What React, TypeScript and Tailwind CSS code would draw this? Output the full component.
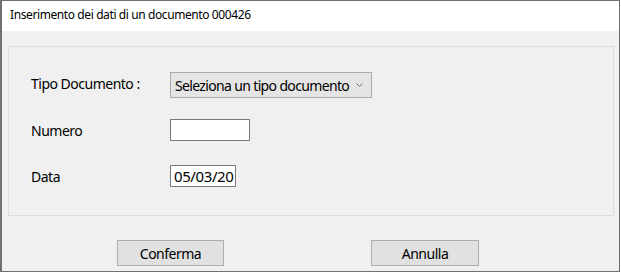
export default function App() {
  const font = { fontFamily: '"Noto Sans", "Open Sans", sans-serif' };
  return (
    <div className="w-[621px] h-[273px] bg-white" style={font}>
      <div className="w-[620px] h-[272px] border border-[#707070] border-l-2 flex flex-col bg-[#f0f0f0]">
        <div className="h-[30px] bg-white flex items-center pl-[8px] pb-[2px] text-[12px] tracking-[-0.4px] text-black whitespace-nowrap">
          Inserimento dei dati di un documento 000426
        </div>
        <div className="flex-1 flex flex-col px-[6px] pt-[15px]">
          <div className="h-[170px] w-[606px] border border-[#dcdcdc] flex flex-col pl-[22px] pt-[25px] text-[14px] tracking-[-0.5px] text-black">
            <div className="flex items-center h-[26px]">
              <span className="w-[139px] pb-[3px]">Tipo Documento :</span>
              <div className="w-[202px] h-[26px] bg-[#e5e5e5] border border-[#acacac] flex items-center pl-[4px] pr-[8px] justify-between whitespace-nowrap">
                <span className="tracking-[-0.65px]">Seleziona un tipo documento</span>
                <svg width="7" height="4" viewBox="0 0 7 4">
                  <path d="M0.5 0.5 L3.5 3.5 L6.5 0.5" fill="none" stroke="#707070" strokeWidth="1" />
                </svg>
              </div>
            </div>
            <div className="flex items-center h-[22px] mt-[21px]">
              <span className="w-[139px]">Numero</span>
              <div className="w-[80px] h-[22px] bg-white border border-[#7a7a7a]" />
            </div>
            <div className="flex items-center h-[22px] mt-[24px]">
              <span className="w-[139px]">Data</span>
              <div className="w-[66px] h-[22px] bg-white border border-[#7a7a7a] flex items-center pl-[3px] text-[15px] tracking-[-0.4px]">
                05/03/20
              </div>
            </div>
          </div>
          <div className="flex mt-[24px] text-[14px] tracking-[-0.5px] text-black">
            <button className="ml-[109px] w-[107px] h-[26px] bg-[#e1e1e1] border border-[#adadad] flex items-center justify-center">
              Conferma
            </button>
            <button className="ml-[147px] w-[108px] h-[26px] bg-[#e1e1e1] border border-[#adadad] flex items-center justify-center">
              Annulla
            </button>
          </div>
        </div>
      </div>
    </div>
  );
}
